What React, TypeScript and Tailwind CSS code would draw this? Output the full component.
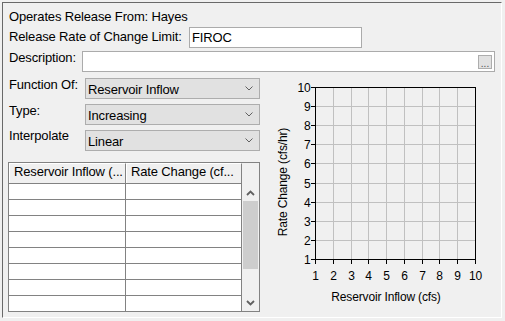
import React from "react";

const font = { fontFamily: '"Liberation Sans", Arial, sans-serif' };

function Chevron() {
  return (
    <svg width="8" height="5" viewBox="0 0 8 5" className="block">
      <polyline points="0.5,0.5 4,4 7.5,0.5" fill="none" stroke="#606060" strokeWidth="1" />
    </svg>
  );
}

function ScrollArrow({ up }: { up?: boolean }) {
  return (
    <svg width="9" height="6" viewBox="0 0 9 6" className="block">
      {up ? (
        <polyline points="1,5 4.5,1.5 8,5" fill="none" stroke="#606060" strokeWidth="1.8" />
      ) : (
        <polyline points="1,1 4.5,4.5 8,1" fill="none" stroke="#606060" strokeWidth="1.8" />
      )}
    </svg>
  );
}

function Select({ value, mt }: { value: string; mt: string }) {
  return (
    <div
      className={`${mt} flex h-[21px] w-[175px] items-center justify-between border border-[#adadad] bg-[#e1e1e1] pl-[2px] pr-[6px]`}
    >
      <span className="leading-[15px] pt-[1px]">{value}</span>
      <Chevron />
    </div>
  );
}

function Chart() {
  const xs = Array.from({ length: 10 }, (_, i) => 315 + Math.round((i * 160) / 9));
  const ys = Array.from({ length: 10 }, (_, i) => 259 - Math.round((i * 172) / 9));
  return (
    <svg width="238" height="234" viewBox="262 77 238 234" className="mt-[5px] block">
      {xs.slice(1, 9).map((x) => (
        <line key={"gx" + x} x1={x + 0.5} y1={87} x2={x + 0.5} y2={259} stroke="#c0c0c0" strokeWidth="1" />
      ))}
      {ys.slice(1, 9).map((y) => (
        <line key={"gy" + y} x1={315} y1={y + 0.5} x2={475} y2={y + 0.5} stroke="#c0c0c0" strokeWidth="1" />
      ))}
      <rect x={315.5} y={87.5} width={160} height={172} fill="none" stroke="#000" strokeWidth="1" />
      {ys.map((y) => (
        <line key={"ty" + y} x1={311} y1={y + 0.5} x2={315} y2={y + 0.5} stroke="#000" strokeWidth="1" />
      ))}
      {xs.map((x) => (
        <line key={"tx" + x} x1={x + 0.5} y1={260} x2={x + 0.5} y2={264} stroke="#000" strokeWidth="1" />
      ))}
      {ys.map((y, i) => (
        <text
          key={"ly" + y}
          x={310.5}
          y={y + 5}
          textAnchor="end"
          fontSize="12"
          fill="#000"
          style={font}
        >
          {i + 1}
        </text>
      ))}
      {xs.map((x, i) => (
        <text key={"lx" + x} x={x + 0.5} y={279.5} textAnchor="middle" fontSize="12" fill="#000" style={font}>
          {i + 1}
        </text>
      ))}
      <text x={386} y={300.5} textAnchor="middle" fontSize="12" fill="#000" style={font}>
        Reservoir Inflow (cfs)
      </text>
      <text
        x={0}
        y={0}
        textAnchor="middle"
        fontSize="12"
        fill="#000"
        style={font}
        transform="translate(286.5 182) rotate(-90)"
      >
        Rate Change (cfs/hr)
      </text>
    </svg>
  );
}

export default function App() {
  const rows = Array.from({ length: 8 }, (_, i) => i);
  return (
    <div
      className="h-[321px] w-[505px] overflow-hidden bg-[#f0f0f0] pl-[2px] pt-[2px] text-[13px] tracking-[-0.15px] text-black"
      style={font}
    >
      <div className="flex h-[316px] w-[500px] flex-col border-b border-l border-r border-t border-b-white border-l-[#696969] border-r-white border-t-[#696969]">
        {/* Row 1 */}
        <div className="mt-[6px] pl-[6px] leading-[15px]">Operates Release From: Hayes</div>
        {/* Row 2 */}
        <div className="mt-[3px] flex h-[21px] items-start pl-[6px]">
          <div className="mt-[2px] w-[180px] leading-[15px]">Release Rate of Change Limit:</div>
          <div className="flex h-[21px] w-[173px] items-center border border-[#ababab] bg-white pl-[2px]">
            <span className="leading-[15px]">FIROC</span>
          </div>
        </div>
        {/* Row 3 */}
        <div className="mt-[2px] flex h-[22px] items-start pl-[6px]">
          <div className="w-[73px] leading-[15px]">Description:</div>
          <div className="mt-[1px] flex h-[21px] w-[413px] items-center justify-end border border-[#ababab] bg-white pr-[2px]">
            <div className="flex h-[14px] w-[14px] items-end justify-center border border-[#adadad] bg-[#e1e1e1] pb-[1px]">
              <span className="text-[10px] leading-[6px] tracking-[0px] text-[#505050]">...</span>
            </div>
          </div>
        </div>
        {/* Lower section */}
        <div className="flex">
          <div className="flex w-[259px] flex-col pl-[6px]">
            <div className="mt-[5px] flex h-[22px] items-start">
              <div className="w-[76px] leading-[15px]">Function Of:</div>
              <Select value="Reservoir Inflow" mt="mt-[1px]" />
            </div>
            <div className="mt-[4px] flex h-[22px] items-start">
              <div className="w-[76px] leading-[15px]">Type:</div>
              <Select value="Increasing" mt="mt-[1px]" />
            </div>
            <div className="mt-[3px] flex h-[23px] items-start">
              <div className="w-[76px] leading-[15px]">Interpolate</div>
              <Select value="Linear" mt="mt-[2px]" />
            </div>
            {/* Table */}
            <div className="-ml-px mt-[11px] flex h-[150px] w-[252px] border border-[#828282] bg-white">
              <div className="flex w-[233px] flex-col">
                <div className="flex h-[21px] border-b border-[#828282] bg-[#f0f0f0]">
                  <div className="h-[20px] w-[117px] overflow-hidden whitespace-nowrap border-l border-t border-r border-l-white border-t-white border-r-[#828282] pl-[4px] leading-[15px]">
                    Reservoir Inflow (...
                  </div>
                  <div className="h-[20px] w-[116px] overflow-hidden whitespace-nowrap border-l border-t border-r border-l-white border-t-white border-r-[#828282] pl-[4px] leading-[15px]">
                    Rate Change (cf...
                  </div>
                </div>
                {rows.map((r) => (
                  <div
                    key={r}
                    className={`flex ${r < 7 ? "h-[16px] border-b border-[#828282]" : "h-[15px]"}`}
                  >
                    <div className="w-[117px] border-r border-[#828282]" />
                    <div className="w-[116px] border-r border-[#828282]" />
                  </div>
                ))}
              </div>
              <div className="flex w-[17px] flex-col bg-[#f0f0f0]">
                <div className="h-[21px]" />
                <div className="flex h-[17px] items-center justify-center">
                  <ScrollArrow up />
                </div>
                <div className="mx-[1px] h-[68px] bg-[#cdcdcd]" />
                <div className="flex-1" />
                <div className="flex h-[17px] items-center justify-center">
                  <ScrollArrow />
                </div>
              </div>
            </div>
          </div>
          <Chart />
        </div>
      </div>
    </div>
  );
}
